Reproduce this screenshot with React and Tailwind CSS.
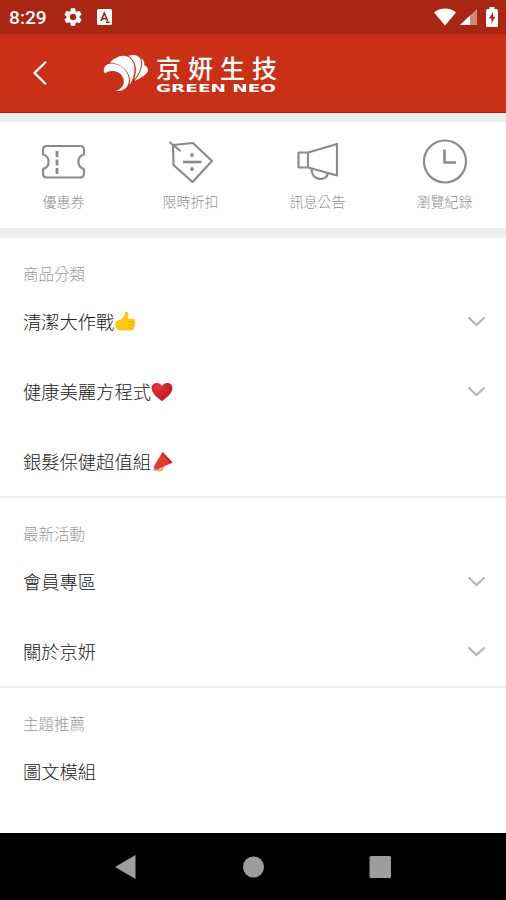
import React from "react";
import { MdSettings } from "react-icons/md";

const shortcuts = [
  {
    label: "優惠券",
    icon: (
      <>
        <path d="M6 7H39Q43 7 43 11V15.500A7.500 7.500 0 0 0 43 30V34Q43 38.500 39 38.500H6Q2 38.500 2 34.500V30A7.500 7.500 0 0 0 2 15.500V11Q2 7 6 7Z" />
        <path d="M16 12V18M16 20.500V26.500M16 29V35" strokeWidth="2.800" />
      </>
    ),
  },
  {
    label: "限時折扣",
    icon: (
      <>
        <path d="M5 6L25 4L44 22L24.500 43L5.500 26Z" />
        <path d="M1.500 3L12.500 12" />
        <path d="M15 23H33.500" strokeWidth="2.600" />
        <circle cx="24" cy="16" r="1.900" fill="#8b8b8b" stroke="none" />
        <circle cx="24" cy="30" r="1.900" fill="#8b8b8b" stroke="none" />
      </>
    ),
  },
  {
    label: "訊息公告",
    icon: (
      <>
        <path d="M3.500 13.500H13L42 5V36.500L13 28.500H3.500Z" />
        <path d="M13 13.500V28.500" />
        <path d="M16.500 30C16.500 42 31.500 43 33 34" />
      </>
    ),
  },
  {
    label: "瀏覽紀錄",
    icon: (
      <>
        <circle cx="23" cy="22.500" r="21" />
        <path d="M22.500 10.500V23.500H34" strokeWidth="2.600" />
      </>
    ),
  },
];

const ThumbsUp = () => (
  <svg className="h-[21px] w-[22px]" viewBox="0 0 21 21" preserveAspectRatio="none">
    <path
      d="M10.700 1C13 .3 14.200 2 13.600 4.500L13 7.800H18C20.200 8 20.500 10 19.400 10.900C20.700 11.800 20.500 13.400 19.300 14.100C20.200 15.200 19.700 16.600 18.500 17.100C18.900 18.800 17.800 19.600 16.300 19.600H8C5.500 19.600 5 18.700 3.600 18.500C.6 18 .5 10.400 2.500 9.900C6.500 9.200 9.500 6.500 10 3.700Z"
      fill="#ffc70f"
    />
    <path
      d="M14 10.900H19M14 14.100H19M14.200 17.100H18.300"
      stroke="#f2a20c"
      strokeWidth=".8"
      strokeLinecap="round"
    />
  </svg>
);

const Heart = () => (
  <svg className="h-[22px] w-[22px]" viewBox="0 0 22 22">
    <defs>
      <radialGradient id="heart" cx=".3" cy=".2" r=".9">
        <stop offset="0" stopColor="#e5373b" />
        <stop offset="1" stopColor="#bd131b" />
      </radialGradient>
    </defs>
    <path
      d="M11 20.300C7.500 17.500.6 12.500.6 7.300C.6 1.400 8.600.2 11 5.200C13.400.2 21.600 1.400 21.400 7.300C21.400 12.500 14.500 17.500 11 20.300Z"
      fill="url(#heart)"
    />
  </svg>
);

const Megaphone = () => (
  <svg className="h-[22px] w-[22px]" viewBox="0 0 22 22">
    <path
      d="M6 18.500C8 20.500 12 19.500 12 15.500"
      fill="none"
      stroke="#f5a62c"
      strokeWidth="2"
    />
    <path d="M2 19L3.500 15.500L6 18.500L3.500 20Z" fill="#b8a8a0" />
    <path d="M11.500 1L21.500 11.500L5.500 19L2.500 16Z" fill="#e33b34" />
    <path d="M11.500 1L21.500 11.500L19 12.700L10.800 3Z" fill="#c92a30" />
  </svg>
);

const sections = [
  {
    title: "商品分類",
    items: [
      { name: "清潔大作戰", emoji: <ThumbsUp />, open: true },
      { name: "健康美麗方程式", emoji: <Heart />, open: true },
      { name: "銀髮保健超值組", emoji: <Megaphone /> },
    ],
  },
  {
    title: "最新活動",
    items: [
      { name: "會員專區", open: true },
      { name: "關於京妍", open: true },
    ],
  },
  {
    title: "主題推薦",
    items: [{ name: "圖文模組" }, { name: "影片模組" }],
  },
];

const StatusBar = () => (
  <div className="flex h-[34px] shrink-0 items-center bg-[#a92613] pl-[9px] pr-[8px] text-white">
    <span className="w-[53px] pt-px font-[Roboto] text-[19.200px] font-medium leading-none">
      8:29
    </span>
    <MdSettings className="h-[22px] w-[22px]" />
    <svg className="ml-[13px] h-[16px] w-[15px]" viewBox="0 0 15 16">
      <rect width="15" height="16" rx="1.500" fill="#fff" />
      <path
        d="M4 12L7.300 4L10.700 12M5.300 9.700H9.500M9 13.300H12.500"
        stroke="#8d2a1d"
        strokeWidth="1.600"
        fill="none"
      />
    </svg>
    <svg className="ml-auto h-[18px] w-[22px]" viewBox="0 0 22 18">
      <path d="M0 4.500C6-.8 16-.8 22 4.500L11 17.500Z" fill="#fff" />
    </svg>
    <svg className="ml-[4px] h-[16px] w-[17px]" viewBox="0 0 17 16">
      <path d="M17 0V16H0Z" fill="#d5867a" />
      <path d="M10 6.600V16H0Z" fill="#fff" />
    </svg>
    <svg className="ml-[9px] h-[20px] w-[12px]" viewBox="0 0 12 20">
      <path
        d="M3.500 0H8.500V2H10.500Q12 2 12 3.500V18.500Q12 20 10.500 20H1.500Q0 20 0 18.500V3.500Q0 2 1.500 2H3.500Z"
        fill="#fff"
      />
      <path d="M7 5L3 11.500H5.500V16.500L9.300 9.800H7Z" fill="#a92613" />
    </svg>
  </div>
);

const Header = () => (
  <div className="flex h-[79px] shrink-0 items-center border-b border-[#b51d10] bg-[#ca3016]">
    <svg
      className="ml-[32px] h-[24px] w-[15px]"
      viewBox="0 0 15 24"
      fill="none"
      stroke="#fff"
      strokeWidth="2.400"
      strokeLinecap="round"
      strokeLinejoin="round"
    >
      <path d="M13.200 1.500L2.500 12L13.200 22.500" />
    </svg>
    {/* Shell shaped brand mark */}
    <svg className="ml-[56px] h-[38px] w-[46px]" viewBox="0 0 46 38">
      <path
        d="M.8 17C.5 12.500 4 9.500 8 9.500C17 9.500 25.500 16 26 26C26 33 20 38.500 13 36.500C18 35.500 22 31 20.500 25C18.500 19 14 17 9 17C5.500 17 3.500 18 2 19.500Z"
        fill="#fff"
      />
      <path
        d="M7 8.300C9.500 6.500 10 4.500 13.500 4C17 .8 24 .8 28 5C33.500 11 32 22 27 30.500C28.500 19 20 10 7 8.300Z"
        fill="#fff"
      />
      <path
        d="M25.500 1.800C30 0 36 1 37.500 5C39.500 11 36.500 20 31 25.500C34.500 17 33.500 7 25.500 1.800Z"
        fill="#fff"
      />
      <path
        d="M38.500 4.500C41 6 41.500 9 41.300 11C45 13 45.700 16 44.500 18C42 22 36 25 31.500 27C37 20 40.500 13 38.500 4.500Z"
        fill="#fff"
      />
    </svg>
    {/* Brand name */}
    <div className="ml-[7px] flex w-[121px] flex-col">
      <div className="flex h-[29px] justify-between text-[25px] font-medium leading-[28px] text-white">
        <span>京</span>
        <span>妍</span>
        <span>生</span>
        <span>技</span>
      </div>
      <svg className="h-[12px] w-[121px]" viewBox="0 0 121 12">
        <text
          x="0"
          y="9.500"
          fill="#fff"
          fontFamily="'DejaVu Sans', sans-serif"
          fontSize="10.500"
          fontWeight="700"
          textLength="120"
          lengthAdjust="spacingAndGlyphs"
        >
          GREEN NEO
        </text>
      </svg>
    </div>
  </div>
);

const Section = ({ title, items }) => (
  <div className="border-b-2 border-[#eeeeee]">
    <p className="h-[48px] pl-[23px] pt-[22px] text-[15.500px] leading-[26px] text-[#999999]">
      {title}
    </p>
    {items.map((item) => (
      <div
        key={item.name}
        className="flex h-[70px] items-center pl-[23px] pr-[20px] pt-px text-[18.300px] text-[#222222]"
      >
        <span>{item.name}</span>
        {item.emoji}
        {item.open && (
          <svg
            className="ml-auto h-[11px] w-[19px]"
            viewBox="0 0 19 11"
            fill="none"
            stroke="#b5b5b5"
            strokeWidth="2.200"
          >
            <path d="M1.500 1.500L9.500 9L17.500 1.500" />
          </svg>
        )}
      </div>
    ))}
  </div>
);

const App = () => {
  return (
    <div className="flex h-[900px] w-[506px] flex-col overflow-hidden bg-white font-['Noto_Sans_CJK_TC',sans-serif] font-light">
      <StatusBar />
      <Header />

      {/* Shortcuts */}
      <div className="flex h-[125px] shrink-0 justify-between border-b-[10px] border-t-[9px] border-[#eeeeee] pl-[24px] pr-[22px]">
        {shortcuts.map((s) => (
          <div key={s.label} className="flex w-[79px] flex-col items-center pt-[17px]">
            <svg
              className="h-[46px] w-[46px]"
              viewBox="0 0 46 46"
              fill="none"
              stroke="#8b8b8b"
              strokeWidth="2.200"
              strokeLinejoin="round"
            >
              {s.icon}
            </svg>
            <span className="mt-[6px] text-[14px] leading-[20px] text-[#8f8f8f]">
              {s.label}
            </span>
          </div>
        ))}
      </div>

      {/* Category list */}
      <div className="h-[595px] shrink-0 overflow-hidden">
        {sections.map((s) => (
          <Section key={s.title} title={s.title} items={s.items} />
        ))}
      </div>

      {/* Navigation bar */}
      <div className="flex flex-1 items-center bg-black pl-[115px]">
        <svg className="h-[24px] w-[276px]" viewBox="0 0 276 24" fill="#9d9d9d">
          <path d="M20.500 0V24L0 12Z" />
          <circle cx="138.500" cy="12" r="10.500" />
          <rect x="254.500" y="1" width="21.500" height="22" rx="1.500" />
        </svg>
      </div>
    </div>
  );
};

export default App;
